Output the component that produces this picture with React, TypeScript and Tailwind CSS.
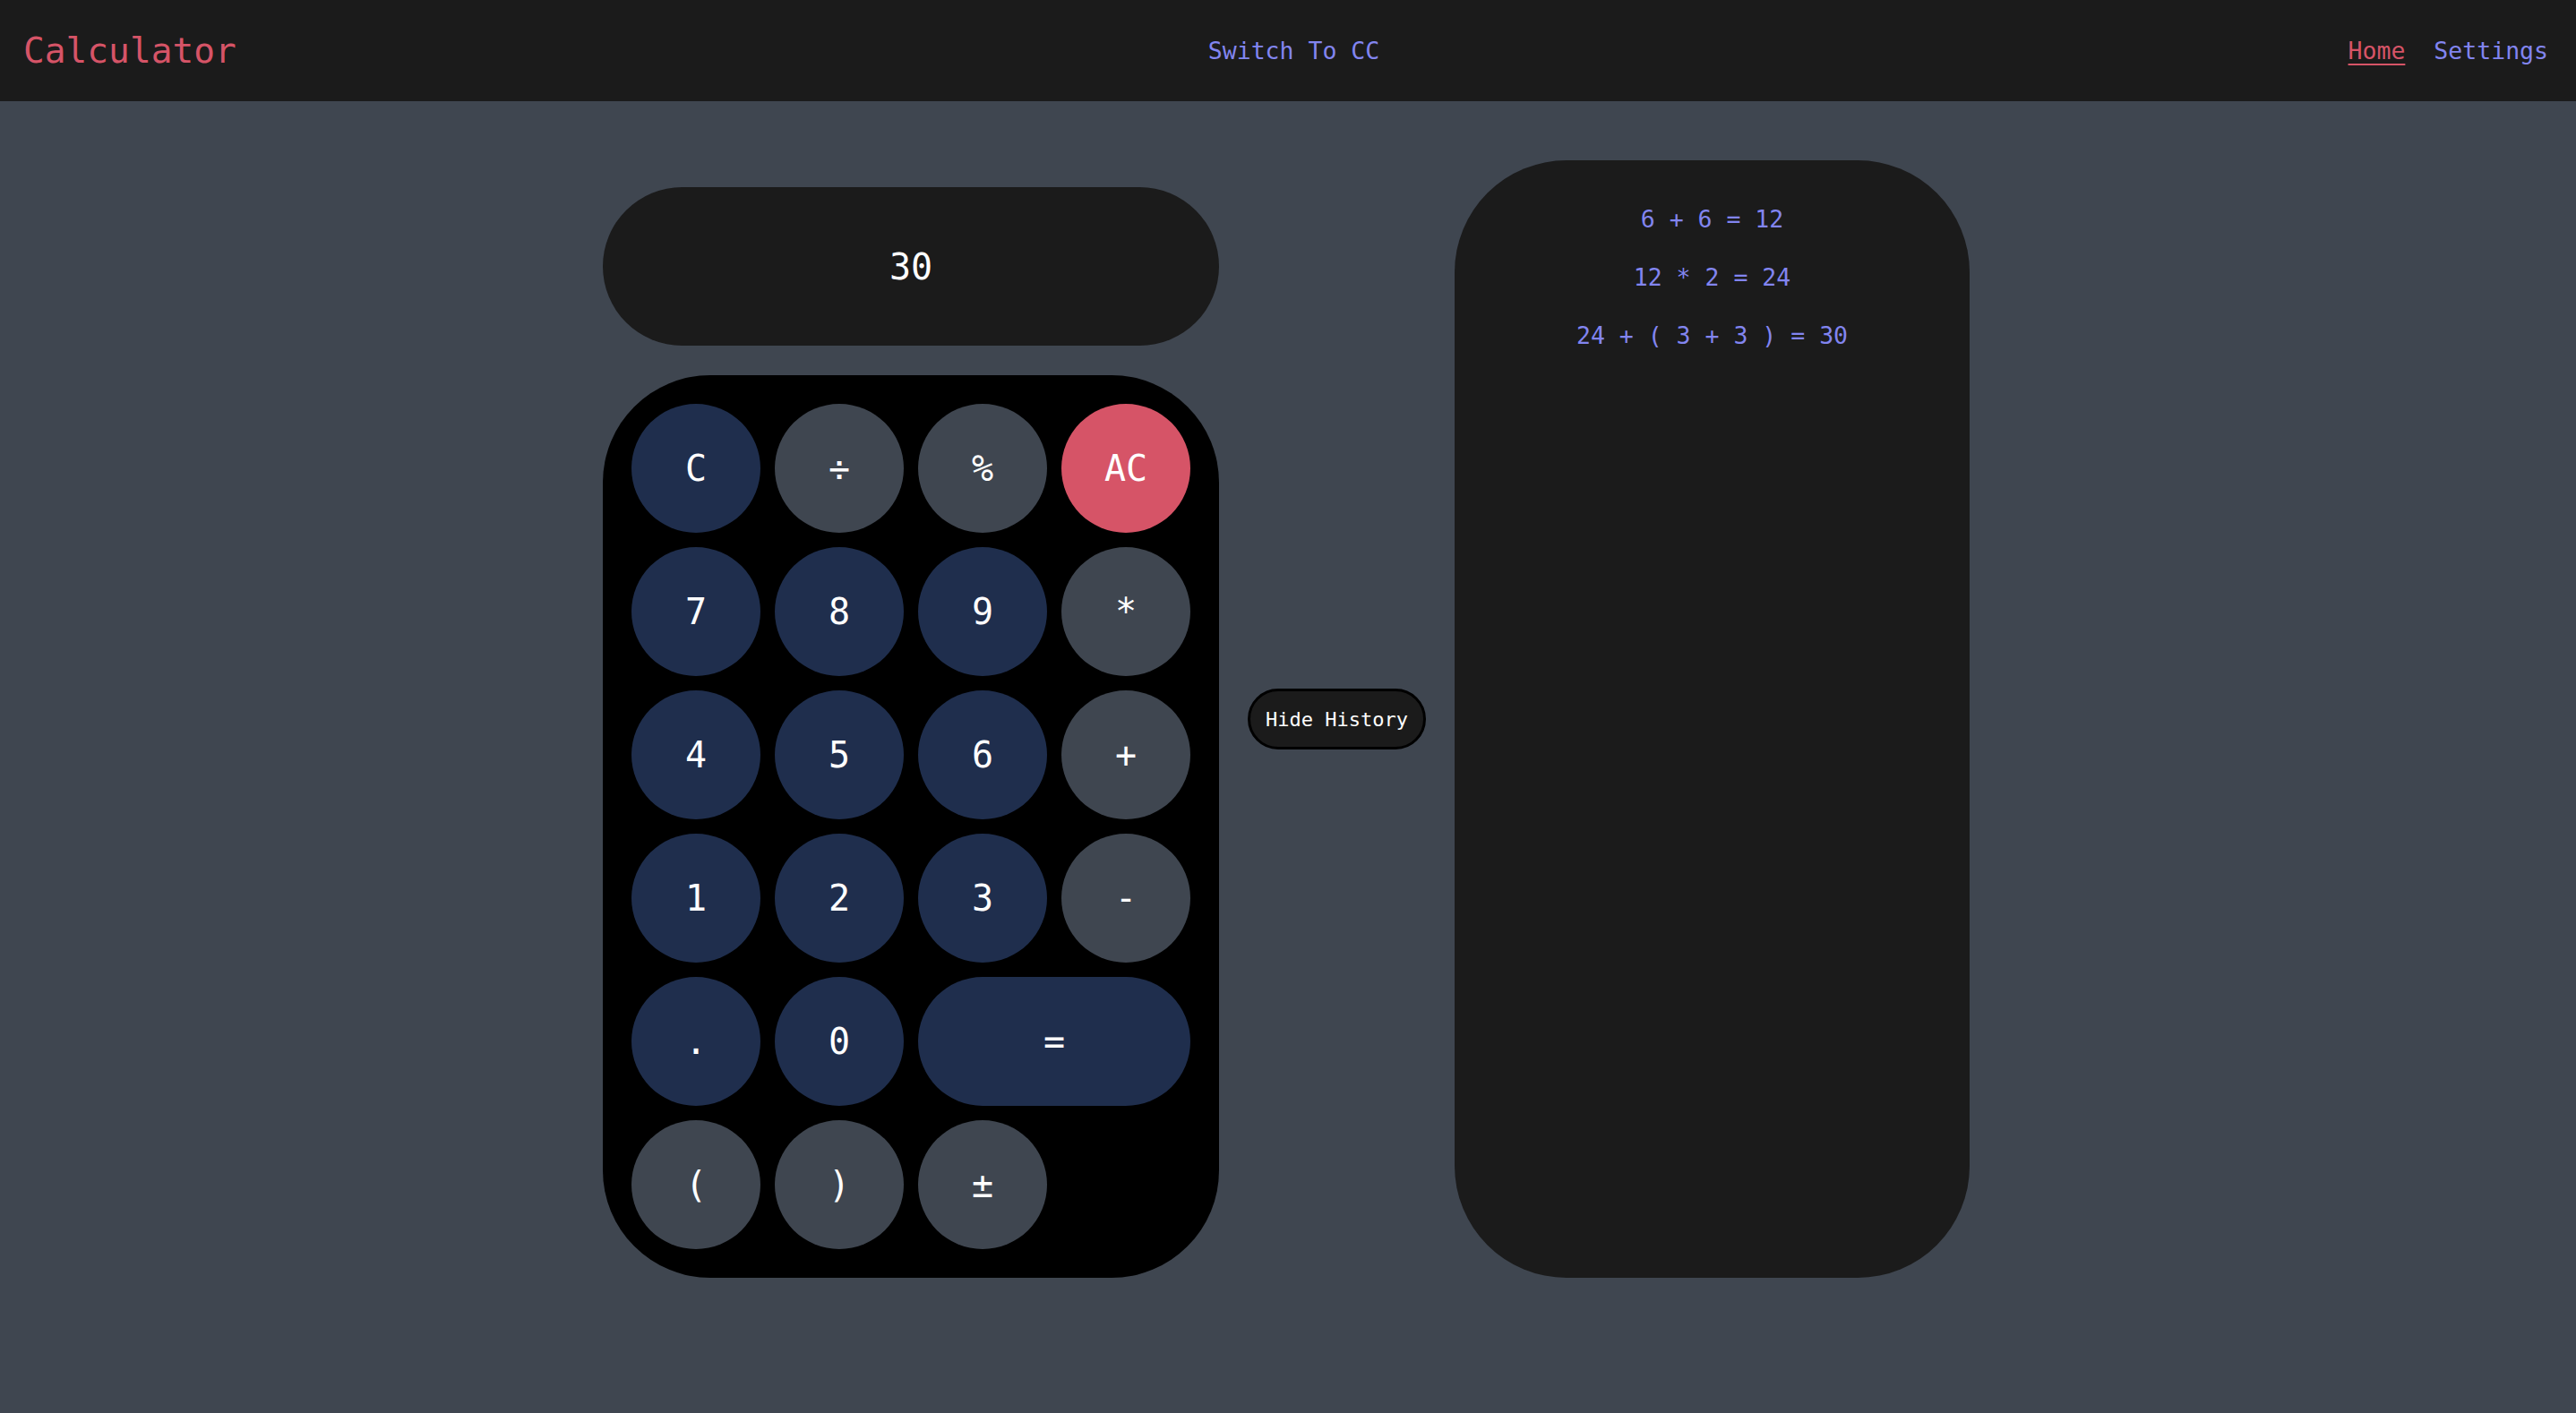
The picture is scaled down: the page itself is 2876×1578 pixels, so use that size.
import React from "react";

type Key = { label: string; tone: "navy" | "gray" | "red"; wide?: boolean };

const keys: Key[] = [
  { label: "C", tone: "navy" },
  { label: "÷", tone: "gray" },
  { label: "%", tone: "gray" },
  { label: "AC", tone: "red" },
  { label: "7", tone: "navy" },
  { label: "8", tone: "navy" },
  { label: "9", tone: "navy" },
  { label: "*", tone: "gray" },
  { label: "4", tone: "navy" },
  { label: "5", tone: "navy" },
  { label: "6", tone: "navy" },
  { label: "+", tone: "gray" },
  { label: "1", tone: "navy" },
  { label: "2", tone: "navy" },
  { label: "3", tone: "navy" },
  { label: "-", tone: "gray" },
  { label: ".", tone: "navy" },
  { label: "0", tone: "navy" },
  { label: "=", tone: "navy", wide: true },
  { label: "(", tone: "gray" },
  { label: ")", tone: "gray" },
  { label: "±", tone: "gray" },
];

const history = ["6 + 6 = 12", "12 * 2 = 24", "24 + ( 3 + 3 ) = 30"];

const toneClass = {
  navy: "bg-[#1f2e4d]",
  gray: "bg-[#3f4650]",
  red: "bg-[#d65467]",
};

function KeyButton({ k }: { k: Key }) {
  return (
    <button
      className={`flex h-36 items-center justify-center rounded-full text-[40px] text-white ${toneClass[k.tone]} ${
        k.wide ? "col-span-2" : "w-36"
      }`}
    >
      {k.label}
    </button>
  );
}

export default function App() {
  return (
    <div className="min-h-screen bg-[#3f4650] font-['DejaVu_Sans_Mono',monospace]">
      <header className="grid h-[113px] grid-cols-3 items-center bg-[#1b1b1b] pl-[26px] pr-[31px]">
        <div className="text-[39.5px] text-[#d65467]">Calculator</div>
        <div className="justify-self-center pl-[18px] text-[26.5px] text-[#8285f0]">Switch To CC</div>
        <nav className="flex items-center gap-[32px] justify-self-end text-[26.5px]">
          <a className="text-[#d65467] underline underline-offset-[5px]">Home</a>
          <a className="text-[#8285f0]">Settings</a>
        </nav>
      </header>

      <main className="flex items-end justify-center gap-8 pr-[4px] pt-[66px]">
        <div className="flex w-[688px] flex-col gap-[33px]">
          <div className="flex h-[177px] items-center justify-center rounded-full bg-[#1b1b1b] text-[40px] text-white">
            30
          </div>
          <div className="grid grid-cols-4 gap-4 rounded-[120px] bg-black p-8">
            {keys.map((k) => (
              <KeyButton key={k.label} k={k} />
            ))}
          </div>
        </div>

        <button className="flex h-[68px] w-[199px] items-center justify-center self-center rounded-full border-[3px] border-black bg-[#1b1b1b] text-[22px] text-white">
          Hide History
        </button>

        <div className="flex h-[1248px] w-[575px] flex-col items-center gap-[25px] rounded-[125px] bg-[#1b1b1b] pt-[46px]">
          {history.map((h) => (
            <div key={h} className="text-[26.5px] leading-[40px] text-[#8285f0]">
              {h}
            </div>
          ))}
        </div>
      </main>
    </div>
  );
}
